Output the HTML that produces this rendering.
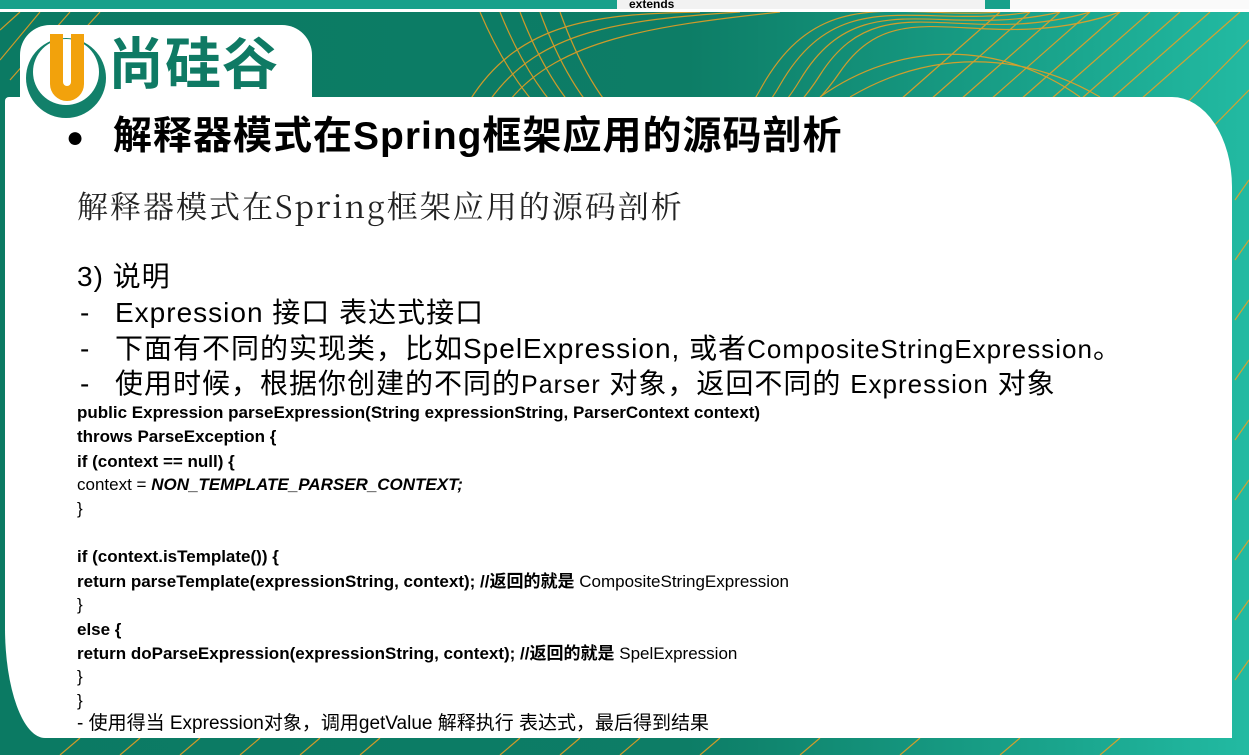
<!DOCTYPE html>
<html><head><meta charset="utf-8"><style>
*{margin:0;padding:0}
body{width:1249px;height:755px;overflow:hidden;position:relative;background:#0e7f68;font-family:"Liberation Sans","Noto Sans CJK SC",sans-serif;color:#000}
.bg{position:absolute;left:0;top:0;width:1249px;height:755px;background:linear-gradient(90deg,#0b7a63 0%,#0d7d66 55%,#1aa58d 85%,#22baa2 100%)}
.top{position:absolute;left:0;top:0;width:1249px;height:9px;background:#17a08a}
.top .g{position:absolute;left:617px;top:0;width:368px;height:9px;background:#f2f2f2;font:bold 12px "Liberation Sans";line-height:9px;padding-left:12px;box-sizing:border-box;overflow:hidden}
.top .w{position:absolute;left:1010px;top:0;width:239px;height:9px;background:#fafafa}
.line{position:absolute;left:0;top:9px;width:1249px;height:3px;background:#fff}
.panel{position:absolute;left:5px;top:97px;width:1227px;height:641px;background:#fff;border-radius:4px 60px 0 40px/4px 90px 0 110px}
.logo{position:absolute;left:20px;top:25px;width:292px;height:90px;background:#fff;border-radius:30px 30px 0 0}
.t{position:absolute;white-space:nowrap}
.b{font-size:28px;line-height:32px;letter-spacing:1px}
.code{position:absolute;left:77px;font-size:17px;font-weight:bold;white-space:nowrap;line-height:20px}
.n{font-weight:normal}
</style></head><body>
<div class="bg"></div>
<svg style="position:absolute;left:0;top:0" width="1249" height="755" fill="none" stroke="#f0a020" stroke-width="1.2" opacity=".85">
<g>
<path d="M480 12 C560 200 700 200 760 90 S900 20 1000 12"/>
<path d="M500 12 C580 210 720 190 780 85 S920 30 1030 12"/>
<path d="M520 12 C600 220 740 180 800 80 S940 40 1060 12"/>
<path d="M540 12 C620 230 760 170 820 75 S960 50 1090 12"/>
<path d="M560 12 C640 235 780 160 840 72 S980 60 1120 12"/>
<path d="M470 100 C520 20 600 14 700 12"/>
<path d="M490 100 C540 30 620 20 740 12"/>
<path d="M510 100 C560 40 650 26 780 12"/>
<path d="M900 100 L1000 12 M930 100 L1030 12 M960 100 L1060 12 M990 100 L1090 12 M1020 100 L1120 12 M1050 100 L1150 12 M1080 100 L1180 12 M1110 100 L1210 12 M1140 100 L1240 12 M1180 110 L1249 40 M1200 140 L1249 90"/>
<path d="M820 97 C900 40 1000 40 1080 97 M850 97 C930 50 1020 50 1100 97"/>
<path d="M0 60 L40 12 M10 80 L70 12 M20 100 L100 12 M0 30 L20 12"/>
<path d="M1235 200 L1249 180 M1235 260 L1249 240 M1235 320 L1249 300 M1235 380 L1249 360 M1235 440 L1249 420 M1235 500 L1249 480 M1235 560 L1249 540 M1235 620 L1249 600 M1235 680 L1249 660"/>
<path d="M60 755 L80 738 M120 755 L140 738 M180 755 L200 738 M240 755 L260 738 M300 755 L320 738 M360 755 L380 738 M500 755 L520 738 M560 755 L580 738 M620 755 L640 738 M700 755 L720 738 M800 755 L820 738 M900 755 L920 738 M1000 755 L1020 738 M1100 755 L1120 738"/>
</g></svg>
<div class="top"><div class="g">extends</div><div class="w"></div></div>
<div class="line"></div>
<div class="logo"></div>
<div class="panel"></div>
<svg style="position:absolute;left:20px;top:28px" width="100" height="100">
<circle cx="46" cy="50" r="40" fill="#12806a"/>
<circle cx="46" cy="44" r="33" fill="#fff"/>
<path d="M30 6 H43 V54 A4 4 0 0 0 51 54 V6 H64 V56 A17 17 0 0 1 30 56 Z" fill="#f2a20c"/>
</svg>
<div class="t" style="left:108px;top:34px;font-size:56px;font-weight:bold;color:#0f7a64;letter-spacing:1px;line-height:62px">尚硅谷</div>
<div class="t" style="left:66px;top:118px;font-size:30px;line-height:40px">●</div>
<div class="t" style="left:113px;top:114px;font-size:39px;font-weight:bold;line-height:46px;letter-spacing:1px">解释器模式在Spring框架应用的源码剖析</div>
<div class="t" style="left:77px;top:186px;font-size:31px;line-height:38px;letter-spacing:2px;font-family:'Noto Serif CJK SC','Liberation Mono',serif;color:#222">解释器模式在Spring框架应用的源码剖析</div>
<div class="t b" style="left:77px;top:261px">3) 说明</div>
<div class="t b" style="left:80px;top:297px">-</div>
<div class="t b" style="left:115px;top:297px">Expression 接口 表达式接口</div>
<div class="t b" style="left:80px;top:333px">-</div>
<div class="t b" style="left:115px;top:333px">下面有不同的实现类，比如SpelExpression, 或者<span style="font-size:26px">CompositeStringExpression</span>。</div>
<div class="t b" style="left:80px;top:368px">-</div>
<div class="t b" style="left:115px;top:368px">使用时候，根据你创建的不同的<span style="font-size:25px">Parser</span> 对象，返回不同的 <span style="font-size:26px">Expression</span> 对象</div>
<div class="code" style="top:403px">public Expression parseExpression(String expressionString, ParserContext context)</div>
<div class="code" style="top:427px">throws ParseException {</div>
<div class="code" style="top:452px">if (context == null) {</div>
<div class="code" style="top:475px"><span class="n">context = </span><i>NON_TEMPLATE_PARSER_CONTEXT;</i></div>
<div class="code n" style="top:499px">}</div>
<div class="code" style="top:547px">if (context.isTemplate()) {</div>
<div class="code" style="top:572px">return parseTemplate(expressionString, context); //返回的就是 <span class="n">CompositeStringExpression</span></div>
<div class="code n" style="top:595px">}</div>
<div class="code" style="top:620px">else {</div>
<div class="code" style="top:644px">return doParseExpression(expressionString, context); //返回的就是 <span class="n">SpelExpression</span></div>
<div class="code n" style="top:667px">}</div>
<div class="code n" style="top:691px">}</div>
<div class="code n" style="top:714px;font-size:19px">- 使用得当 Expression对象，调用getValue 解释执行 表达式，最后得到结果</div>
</body></html>
